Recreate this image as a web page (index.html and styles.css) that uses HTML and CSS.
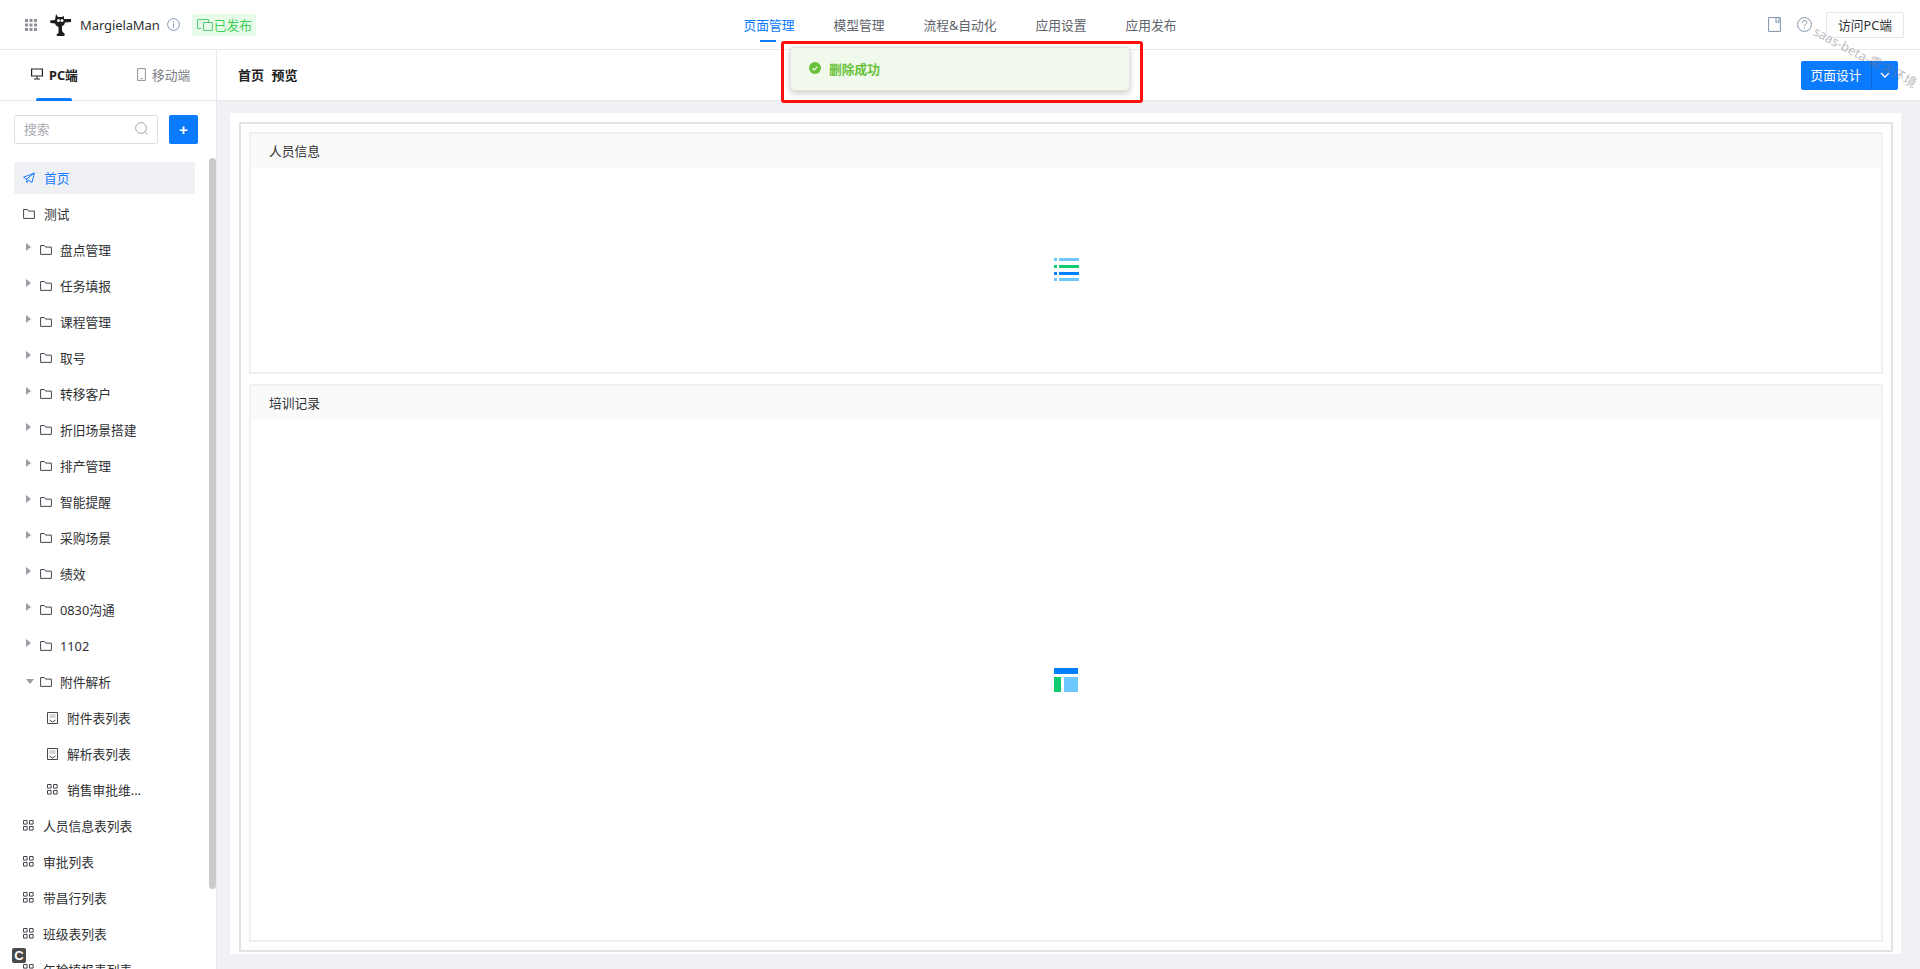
FILE: index.html
```html
<!DOCTYPE html>
<html>
<head>
    <meta charset="utf-8">
    <title>页面管理</title>
    <link rel="stylesheet" href="styles.css">
</head>
<body>
    <svg class="icon-defs" width="0" height="0">
        <symbol id="i-folder" viewBox="0 0 12 12"><path d="M.6 1.5h3.8l1.2 1.6h5.8v7.3H.6z" fill="none" stroke="currentColor"/></symbol>
        <symbol id="i-grid" viewBox="0 0 11 11"><path d="M.5.5h3.6v3.6H.5zM6.5.5h3.6v3.6H6.5zM.5 6.5h3.6v3.6H.5zM6.5 6.5h3.6v3.6H6.5z" fill="none" stroke="currentColor"/></symbol>
        <symbol id="i-form" viewBox="0 0 11 12"><path d="M.5.5h10v11H.5z" fill="none" stroke="currentColor"/><path d="M2.5 3h6M2.5 5h6" stroke="#aaa"/><path d="M2.5 8l3 2 3-2" fill="none" stroke="currentColor"/></symbol>
    </svg>

    <header class="topbar">
        <div class="app-info">
            <svg class="apps-icon" width="12" height="12" viewBox="0 0 12 12" fill="#8d8f96">
                <rect x="0" y="0" width="3" height="3"/><rect x="4.5" y="0" width="3" height="3"/><rect x="9" y="0" width="3" height="3"/>
                <rect x="0" y="4.5" width="3" height="3"/><rect x="4.5" y="4.5" width="3" height="3"/><rect x="9" y="4.5" width="3" height="3"/>
                <rect x="0" y="9" width="3" height="3"/><rect x="4.5" y="9" width="3" height="3"/><rect x="9" y="9" width="3" height="3"/>
            </svg>
            <svg class="avatar" width="22" height="22" viewBox="0 0 22 22">
                <path d="M6 0l2 3h4l2-1v3h7v3l-6 .5-1 2.5-2 1v5l3 3.500-1 1.500H7l-.5-1.500 2-1.500v-6l-2.500-1.500-1-2L.5 9 0 6.500l5-.5z" fill="#1c1c1c"/>
                <circle cx="8.5" cy="6.5" r="1.5" fill="#fff"/>
                <circle cx="12" cy="6.5" r="1.5" fill="#fff"/>
            </svg>
            <span class="app-name">MargielaMan</span>
            <svg class="info-icon" width="13" height="13" viewBox="0 0 13 13" fill="none" stroke="#7f97b3">
                <circle cx="6.5" cy="6.5" r="5.9"/><path d="M6.5 5.5v4.2M6.5 3.2v1.3"/>
            </svg>
            <span class="status-tag">
                <svg width="16" height="12" viewBox="0 0 16 12" fill="none" stroke="#52c878">
                    <path d="M4 9.5H.6V.6h11v2.900"/><path d="M6.5 3.5h8.900v7.900H6.5z"/>
                </svg>
                已发布
            </span>
        </div>
        <nav class="main-nav">
            <a class="nav-item active">页面管理</a>
            <a class="nav-item">模型管理</a>
            <a class="nav-item">流程&amp;自动化</a>
            <a class="nav-item">应用设置</a>
            <a class="nav-item">应用发布</a>
        </nav>
        <div class="top-actions">
            <svg width="13" height="15" viewBox="0 0 13 15" fill="none" stroke="#7f92a8">
                <path d="M.6.6h11.8v13.8H.6z"/><path d="M8 .6v5l1.6-1.2 1.4 1.2v-5"/>
            </svg>
            <svg class="help-icon" width="15" height="15" viewBox="0 0 15 15" fill="none" stroke="#7f92a8">
                <circle cx="7.5" cy="7.5" r="6.9"/><path d="M5.4 5.8c0-3 4.4-3 4.4-.3 0 1.8-2.3 1.8-2.3 3.7M7.5 10.4v1.2"/>
            </svg>
            <button class="visit-btn">访问PC端</button>
        </div>
    </header>

    <div class="workspace">
        <aside class="sidebar">
            <div class="device-tabs">
                <div class="device-tab active">
                    <svg width="12" height="12" viewBox="0 0 12 12" fill="none" stroke="#222">
                        <path d="M.6 1h10.8v7H.6z" stroke-width="1.2"/><path d="M3 11h6M6 8v3"/>
                    </svg>
                    PC端
                </div>
                <div class="device-tab">
                    <svg width="9" height="13" viewBox="0 0 9 13" fill="none" stroke="#8d9096">
                        <path d="M.6.6h7.8v11.8H.6z"/><path d="M3.5 10.5h2"/>
                    </svg>
                    移动端
                </div>
            </div>
            <div class="search-row">
                <div class="search-box">
                    <span>搜索</span>
                    <svg width="13" height="13" viewBox="0 0 13 13" fill="none" stroke="#a8abb2">
                        <circle cx="6" cy="6" r="5.4"/><path d="M10 10l2.5 2.5"/>
                    </svg>
                </div>
                <button class="add-btn">+</button>
            </div>
            <ul class="tree">
                <li class="tree-row active">
                    <svg class="row-icon" width="12" height="12" viewBox="0 0 12 12" fill="none" stroke="#1a7cff"><path d="M.6 5.2L11.4 1 9 10.4 5.4 8 4 10.600 3.600 7z"/><path d="M3.6 7l7.8-6"/></svg>
                    首页
                </li>
                <li class="tree-row"><svg class="row-icon" width="12" height="12"><use href="#i-folder"/></svg>测试</li>
                <li class="tree-row folder"><i class="caret"></i><svg class="row-icon" width="12" height="12"><use href="#i-folder"/></svg>盘点管理</li>
                <li class="tree-row folder"><i class="caret"></i><svg class="row-icon" width="12" height="12"><use href="#i-folder"/></svg>任务填报</li>
                <li class="tree-row folder"><i class="caret"></i><svg class="row-icon" width="12" height="12"><use href="#i-folder"/></svg>课程管理</li>
                <li class="tree-row folder"><i class="caret"></i><svg class="row-icon" width="12" height="12"><use href="#i-folder"/></svg>取号</li>
                <li class="tree-row folder"><i class="caret"></i><svg class="row-icon" width="12" height="12"><use href="#i-folder"/></svg>转移客户</li>
                <li class="tree-row folder"><i class="caret"></i><svg class="row-icon" width="12" height="12"><use href="#i-folder"/></svg>折旧场景搭建</li>
                <li class="tree-row folder"><i class="caret"></i><svg class="row-icon" width="12" height="12"><use href="#i-folder"/></svg>排产管理</li>
                <li class="tree-row folder"><i class="caret"></i><svg class="row-icon" width="12" height="12"><use href="#i-folder"/></svg>智能提醒</li>
                <li class="tree-row folder"><i class="caret"></i><svg class="row-icon" width="12" height="12"><use href="#i-folder"/></svg>采购场景</li>
                <li class="tree-row folder"><i class="caret"></i><svg class="row-icon" width="12" height="12"><use href="#i-folder"/></svg>绩效</li>
                <li class="tree-row folder"><i class="caret"></i><svg class="row-icon" width="12" height="12"><use href="#i-folder"/></svg>0830沟通</li>
                <li class="tree-row folder"><i class="caret"></i><svg class="row-icon" width="12" height="12"><use href="#i-folder"/></svg>1102</li>
                <li class="tree-row folder"><i class="caret open"></i><svg class="row-icon" width="12" height="12"><use href="#i-folder"/></svg>附件解析</li>
                <li class="tree-row leaf"><svg class="row-icon" width="11" height="12"><use href="#i-form"/></svg>附件表列表</li>
                <li class="tree-row leaf"><svg class="row-icon" width="11" height="12"><use href="#i-form"/></svg>解析表列表</li>
                <li class="tree-row leaf"><svg class="row-icon" width="11" height="11"><use href="#i-grid"/></svg>销售审批维...</li>
                <li class="tree-row"><svg class="row-icon" width="11" height="11"><use href="#i-grid"/></svg>人员信息表列表</li>
                <li class="tree-row"><svg class="row-icon" width="11" height="11"><use href="#i-grid"/></svg>审批列表</li>
                <li class="tree-row"><svg class="row-icon" width="11" height="11"><use href="#i-grid"/></svg>带昌行列表</li>
                <li class="tree-row"><svg class="row-icon" width="11" height="11"><use href="#i-grid"/></svg>班级表列表</li>
                <li class="tree-row"><svg class="row-icon" width="11" height="11"><use href="#i-grid"/></svg>年检填报表列表</li>
            </ul>
            <div class="scroll-thumb"></div>
            <div class="corner-badge">C</div>
        </aside>

        <div class="content">
            <div class="page-head">
                <h2 class="page-title">首页 预览</h2>
                <div class="split-btn">
                    <span class="split-main">页面设计</span>
                    <span class="split-arrow">
                        <svg width="10" height="6" viewBox="0 0 10 6" fill="none" stroke="#fff" stroke-width="1.4"><path d="M1 1l4 4 4-4"/></svg>
                    </span>
                </div>
            </div>
            <main class="canvas">
                <div class="card">
                    <div class="card-inner">
                        <section class="panel panel-short">
                            <div class="panel-head">人员信息</div>
                            <div class="panel-body">
                                <svg width="25" height="24" viewBox="0 0 25 24">
                                    <rect x="0" y="0" width="3" height="3" fill="#6cc8ff"/><rect x="5" y="0" width="20" height="3" fill="#6cc8ff"/>
                                    <rect x="0" y="7" width="3" height="3" fill="#0ecb71"/><rect x="5" y="7" width="20" height="3" fill="#0ecb71"/>
                                    <rect x="0" y="14" width="3" height="3" fill="#0080ff"/><rect x="5" y="14" width="20" height="3" fill="#0080ff"/>
                                    <rect x="0" y="20" width="3" height="3" fill="#6cc8ff"/><rect x="5" y="20" width="20" height="3" fill="#6cc8ff"/>
                                </svg>
                            </div>
                        </section>
                        <section class="panel panel-tall">
                            <div class="panel-head">培训记录</div>
                            <div class="panel-body">
                                <svg width="25" height="24" viewBox="0 0 25 24">
                                    <rect x="0" y="0" width="24" height="6" fill="#0080ff"/>
                                    <rect x="0" y="9" width="7" height="15" fill="#0ecb71"/>
                                    <rect x="10" y="9" width="14" height="15" fill="#6cc8ff"/>
                                </svg>
                            </div>
                        </section>
                    </div>
                </div>
            </main>
        </div>
    </div>

    <div class="toast">
        <svg width="12" height="12" viewBox="0 0 12 12"><circle cx="6" cy="6" r="6" fill="#67c23a"/><path d="M3.4 6.2l1.8 1.7 3.2-3.3" fill="none" stroke="#fff" stroke-width="1.1"/></svg>
        删除成功
    </div>
    <div class="red-mark"></div>
    <div class="watermark">saas-beta-需求环境</div>
</body>
</html>
```

FILE: styles.css
```css
* {
    box-sizing: border-box;
}
html, body {
    margin: 0;
    height: 100%;
    overflow: hidden;
}
body {
    font-family: "Noto Sans", "Noto Sans CJK SC", sans-serif;
    font-size: 12.75px;
    color: #303133;
    background: #fff;
    display: flex;
    flex-direction: column;
}
.icon-defs {
    position: absolute;
}

/* top bar */
.topbar {
    height: 50px;
    flex: none;
    display: grid;
    grid-template-columns: 1fr auto 1fr;
    align-items: center;
    border-bottom: 1px solid #e8e9ec;
    padding: 0 16px;
}
.app-info {
    display: flex;
    align-items: center;
    padding-left: 9px;
}
.avatar {
    margin-left: 13px;
}
.app-name {
    margin-left: 8px;
    font-size: 13px;
    letter-spacing: -0.1px;
}
.info-icon {
    margin-left: 7px;
}
.status-tag {
    margin-left: 12px;
    height: 22px;
    padding: 0 4px 0 5px;
    display: flex;
    align-items: center;
    gap: 1px;
    background: #e8fbe8;
    border-radius: 2px;
    color: #3ecf5a;
}
.main-nav {
    display: flex;
    gap: 39px;
    height: 49px;
}
.nav-item {
    position: relative;
    padding-top: 15px;
    color: #60646c;
    line-height: 20px;
}
.nav-item.active {
    color: #0a7aff;
}
.nav-item.active::after {
    content: "";
    position: absolute;
    left: 17px;
    top: 40px;
    width: 16px;
    height: 2px;
    background: #0a7aff;
}
.top-actions {
    display: flex;
    align-items: center;
    justify-content: flex-end;
}
.help-icon {
    margin-left: 16px;
}
.visit-btn {
    margin-left: 14px;
    width: 78px;
    height: 26px;
    padding: 0;
    background: #fff;
    border: 1px solid #e3e5ea;
    border-radius: 2px;
    font: inherit;
    color: #303133;
}

.workspace {
    flex: 1;
    display: flex;
    min-height: 0;
}

/* sidebar */
.sidebar {
    position: relative;
    width: 217px;
    flex: none;
    border-right: 1px solid #e8e9ec;
    overflow: hidden;
}
.device-tabs {
    height: 51px;
    display: flex;
    border-bottom: 1px solid #e8e9ec;
}
.device-tab {
    position: relative;
    display: flex;
    align-items: center;
    gap: 6px;
    padding-bottom: 2px;
    color: #7d8087;
}
.device-tab:first-child {
    margin-left: 31px;
    width: 106px;
}
.device-tab.active {
    color: #222;
    font-weight: 700;
}
.device-tab.active::after {
    content: "";
    position: absolute;
    left: 5px;
    bottom: -1px;
    width: 36px;
    height: 3px;
    background: #0a7aff;
    border-radius: 2px 2px 0 0;
}
.search-row {
    display: flex;
    gap: 11px;
    margin: 14px 0 0 14px;
}
.search-box {
    width: 144px;
    height: 29px;
    border: 1px solid #dcdfe6;
    border-radius: 2px;
    display: flex;
    align-items: center;
    justify-content: space-between;
    padding: 0 9px 2px;
    color: #a8abb2;
}
.add-btn {
    width: 29px;
    height: 29px;
    padding: 0;
    background: #0a7aff;
    color: #fff;
    border: none;
    border-radius: 2px;
    font: 700 15px "Liberation Sans", sans-serif;
}
.tree {
    list-style: none;
    margin: 18px 0 0;
    padding: 0;
}
.tree-row {
    position: relative;
    height: 36px;
    margin: 0 21px 0 14px;
    padding: 0 0 1px 9px;
    display: flex;
    align-items: center;
    white-space: nowrap;
    color: #303133;
}
.tree-row.active {
    height: 32px;
    margin-bottom: 2px;
    background: #f0f1f4;
    border-radius: 2px;
    color: #1a7cff;
}
.row-icon {
    margin-right: 9px;
    flex: none;
    color: #4a4350;
}
.tree-row.folder {
    padding-left: 26px;
}
.tree-row.folder .row-icon {
    margin-right: 8px;
}
.tree-row.leaf {
    padding-left: 33px;
}
.caret {
    position: absolute;
    left: 12px;
    top: 11px;
    border-left: 5px solid #9a9da5;
    border-top: 4px solid transparent;
    border-bottom: 4px solid transparent;
}
.caret.open {
    left: 12px;
    top: 15px;
    border-top: 5px solid #9a9da5;
    border-left: 4px solid transparent;
    border-right: 4px solid transparent;
    border-bottom: none;
}
.scroll-thumb {
    position: absolute;
    left: 209px;
    top: 108px;
    width: 7px;
    height: 731px;
    background: #cbcbcb;
    border-radius: 4px;
}
.corner-badge {
    position: absolute;
    left: 12px;
    top: 898px;
    width: 14px;
    height: 15px;
    background: #4a4a4a;
    border-radius: 2px;
    color: #fff;
    font: 700 13px/15px "Liberation Sans", sans-serif;
    text-align: center;
}

/* content */
.content {
    flex: 1;
    min-width: 0;
    display: flex;
    flex-direction: column;
}
.page-head {
    height: 51px;
    flex: none;
    border-bottom: 1px solid #e8e9ec;
    display: flex;
    align-items: center;
    justify-content: space-between;
    padding: 0 22px 0 21px;
}
.page-title {
    margin: 0 0 2px;
    font-size: 13px;
    font-weight: 700;
    word-spacing: 4px;
    color: #222;
}
.split-btn {
    display: flex;
    height: 29px;
    background: #0a7aff;
    color: #fff;
    border-radius: 2px;
    line-height: 28px;
}
.split-main {
    width: 71px;
    text-align: center;
    border-right: 1px solid #0a68d8;
}
.split-arrow {
    width: 26px;
    display: flex;
    align-items: center;
    justify-content: center;
}
.canvas {
    flex: 1;
    min-height: 0;
    background: #f0f1f4;
    padding: 12px 19px 15px 13px;
    display: flex;
}
.card {
    flex: 1;
    background: #fff;
    padding: 9px 8px 2px 9px;
    display: flex;
}
.card-inner {
    flex: 1;
    border: 2px solid #e2e3e5;
    padding: 8px;
    display: flex;
    flex-direction: column;
    gap: 10px;
}
.panel {
    border: 2px solid #f0f0f0;
    display: flex;
    flex-direction: column;
}
.panel-short {
    height: 242px;
    flex: none;
}
.panel-tall {
    flex: 1;
}
.panel-head {
    height: 34px;
    flex: none;
    background: #fafafa;
    padding-left: 18px;
    line-height: 34px;
    color: #303133;
}
.panel-body {
    flex: 1;
    display: flex;
    align-items: center;
    justify-content: center;
}

/* overlays */
.toast {
    position: absolute;
    left: 790px;
    top: 47px;
    width: 340px;
    height: 44px;
    padding: 0 0 2px 18px;
    display: flex;
    align-items: center;
    gap: 8px;
    background: #f0f9eb;
    border: 1px solid #e1e3e0;
    border-radius: 4px;
    box-shadow: 0 2px 6px rgba(0,0,0,0.22);
    color: #67c23a;
    font-weight: 700;
}
.red-mark {
    position: absolute;
    left: 781px;
    top: 41px;
    width: 362px;
    height: 62px;
    border: 3px solid #fb1010;
    border-radius: 3px;
    pointer-events: none;
}
.watermark {
    position: absolute;
    left: 1808px;
    top: 47px;
    transform: rotate(28deg);
    color: rgba(120,120,120,0.5);
    font-size: 13px;
    white-space: nowrap;
    pointer-events: none;
}
```
